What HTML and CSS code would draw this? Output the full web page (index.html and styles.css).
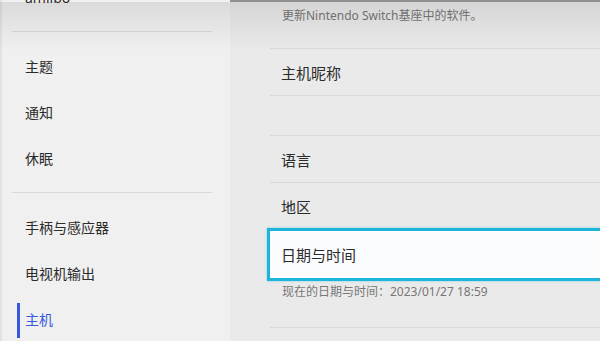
FILE: index.html
```html
<!DOCTYPE html>
<html lang="zh-CN">
<head>
    <meta charset="UTF-8">
    <meta name="viewport" content="width=device-width, initial-scale=1.0">
    <title>主机设置</title>
    <link rel="stylesheet" href="styles.css">
</head>
<body>
    <div class="settings">
        <nav class="sidebar">
            <div class="menu-item">amiibo</div>
            <div class="menu-divider"></div>
            <div class="menu-item">主题</div>
            <div class="menu-item">通知</div>
            <div class="menu-item">休眠</div>
            <div class="menu-divider"></div>
            <div class="menu-item">手柄与感应器</div>
            <div class="menu-item">电视机输出</div>
            <div class="menu-item active">主机</div>
        </nav>

        <main class="panel">
            <div class="list">
                <p class="note note-top">更新Nintendo Switch基座中的软件。</p>
                <div class="row">主机昵称</div>
                <div class="row row-empty"></div>
                <div class="row">语言</div>
                <div class="row">地区</div>
                <div class="row selected">日期与时间</div>
                <p class="note note-bottom">现在的日期与时间：2023/01/27 18:59</p>
            </div>
        </main>
    </div>
</body>
</html>
```

FILE: styles.css
```css
:root {
    --sidebar-bg: #f0f0f0;
    --panel-bg: #eaeaea;
    --text-dark: #2b2b2b;
    --text-muted: #777777;
    --line: #d9d9d9;
    --accent-blue: #3659dc;
    --focus-cyan: #1cb4d8;
}

html, body {
    margin: 0;
    height: 100%;
    overflow: hidden;
}

body {
    font-family: "Noto Sans", "Noto Sans CJK SC", sans-serif;
    color: var(--text-dark);
    background: var(--panel-bg);
}

.settings {
    position: relative;
    display: flex;
    height: 341px;
    border-top: 2px solid #8f8f8f;
    box-sizing: border-box;
}

/* soft shade under the top bar */
.settings::before {
    content: "";
    position: absolute;
    left: 0;
    right: 0;
    top: 0;
    height: 50px;
    background: linear-gradient(to bottom, rgba(0, 0, 0, 0.09), rgba(0, 0, 0, 0));
    pointer-events: none;
}

.sidebar {
    width: 230px;
    flex-shrink: 0;
    background: var(--sidebar-bg);
    border-left: 2px solid #e2e2e2;
    box-sizing: border-box;
    margin-top: -28px;
}

.menu-item {
    height: 46px;
    display: flex;
    align-items: center;
    padding-left: 23px;
    font-size: 14px;
    position: relative;
}

.menu-item.active {
    color: var(--accent-blue);
}

.menu-item.active::before {
    content: "";
    position: absolute;
    left: 15px;
    top: 7px;
    width: 3px;
    height: 35px;
    background: var(--accent-blue);
}

.menu-divider {
    height: 1px;
    background: var(--line);
    margin: 11px 18px 11px 10px;
}

.panel {
    flex: 1;
    overflow: hidden;
}

.list {
    margin-left: 40px;
    margin-right: -40px;
}

.note {
    margin: 0;
    font-size: 12px;
    line-height: 16px;
    color: var(--text-muted);
    padding-left: 12px;
}

.note-top {
    padding-top: 6px;
    padding-bottom: 24px;
    border-bottom: 1px solid var(--line);
}

.note-bottom {
    padding-top: 3px;
    padding-bottom: 27px;
    border-bottom: 1px solid var(--line);
}

.row {
    height: 46px;
    display: flex;
    align-items: center;
    padding-left: 11px;
    font-size: 15px;
    border-bottom: 1px solid var(--line);
}

.row-empty {
    height: 39px;
}

.selected {
    height: 47px;
    margin-left: -3px;
    margin-top: -2px;
    border: 3px solid var(--focus-cyan);
    background: #fbfcfd;
    box-shadow: 0 0 2px rgba(28, 180, 216, 0.5);
}
```
